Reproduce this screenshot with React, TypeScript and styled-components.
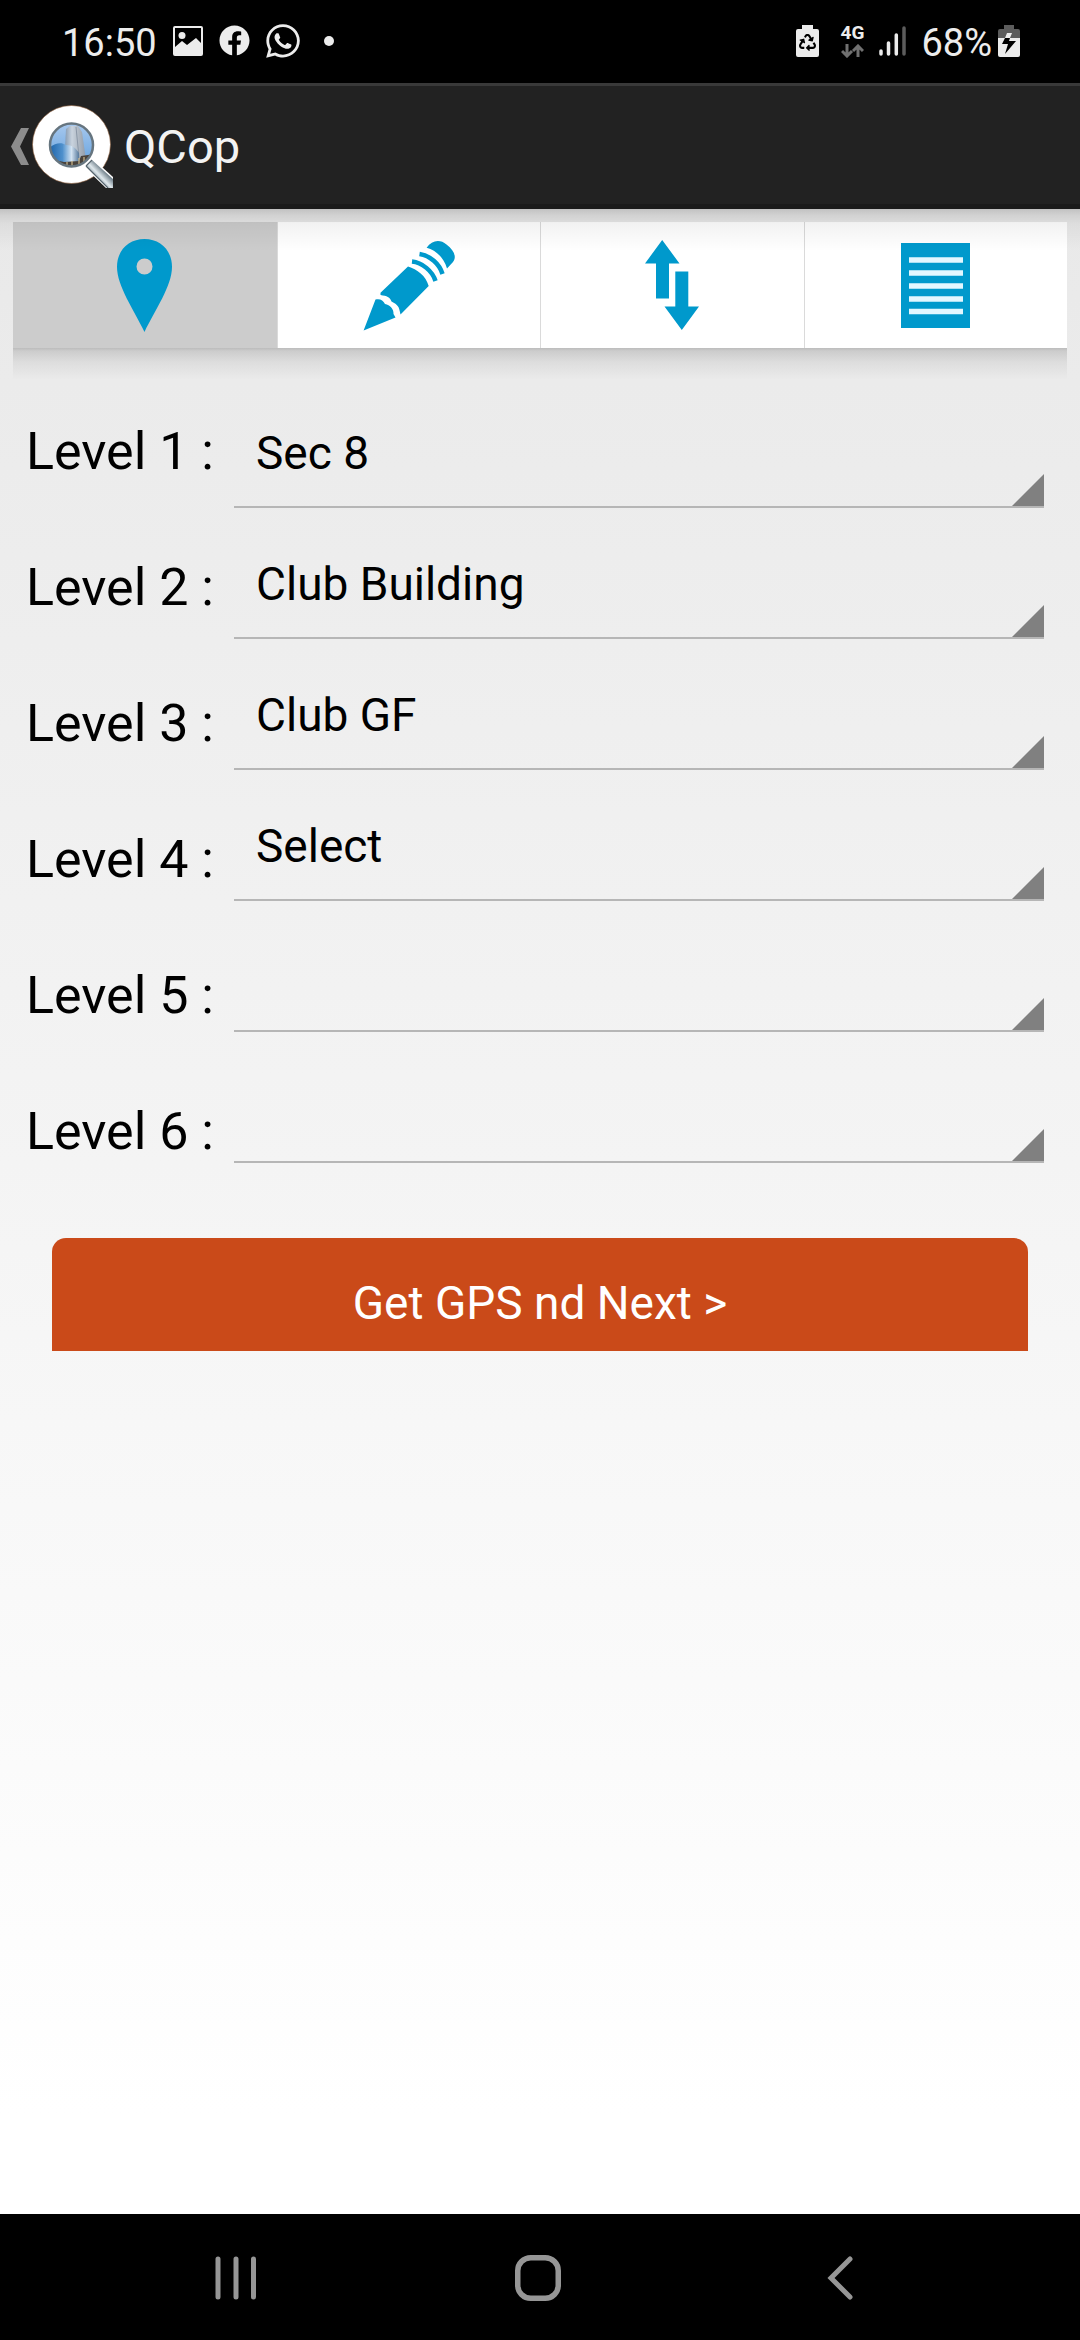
import React from "react";
import styled, { createGlobalStyle } from "styled-components";
import { FaFacebook, FaRecycle, FaWhatsapp } from "react-icons/fa";

const GlobalStyle = createGlobalStyle`
  *, *::before, *::after { box-sizing: border-box; }
  body { margin: 0; font-family: Roboto, "Noto Sans", sans-serif; }
  button, select { font: inherit; margin: 0; border: 0; border-radius: 0; background: none; }
  svg { display: block; flex: none; }
`;

const Screen = styled.div`
  display: flex;
  flex-direction: column;
  min-height: 100vh;
  color: #000;
`;

const StatusBar = styled.header`
  display: flex;
  align-items: center;
  justify-content: space-between;
  height: 83px;
  padding: 0 60px 2px 62px;
  background: #000;
  color: #ececec;
`;

const StatusGroup = styled.div<{ $gap: number }>`
  display: flex;
  align-items: center;
  gap: ${(p) => p.$gap}px;
`;

const StatusText = styled.span`
  padding-top: 4px;
  font-size: 38px;
  line-height: 44px;
`;

const MoreDot = styled.span`
  width: 10px;
  height: 10px;
  margin-left: 8px;
  border-radius: 50%;
  background: #ececec;
`;

const Network = styled.div`
  display: flex;
  flex-direction: column;
  align-items: center;
  gap: 2px;
  font-size: 19px;
  font-weight: 700;
  line-height: 18px;
`;

const ActionBar = styled.div`
  position: relative;
  display: flex;
  align-items: center;
  height: 126px;
  padding: 3px 0 0 11px;
  border-top: 3px solid #393939;
  border-bottom: 5px solid #1b1b1b;
  background: #222;

  /* soft shadow cast over the content below */
  &::after {
    content: "";
    position: absolute;
    z-index: 1;
    top: 123px;
    left: 0;
    right: 0;
    height: 42px;
    background: linear-gradient(rgba(0, 0, 0, 0.17), rgba(0, 0, 0, 0.1) 15%, rgba(0, 0, 0, 0.05) 35%, rgba(0, 0, 0, 0));
    pointer-events: none;
  }
`;

const UpButton = styled.button`
  display: flex;
  align-items: center;
  gap: 3px;
  padding: 0;
`;

const AppTitle = styled.h1`
  margin: 0 0 0 10px;
  color: #f3f3f3;
  font-size: 47px;
  font-weight: 400;
  line-height: 56px;
`;

const Content = styled.main`
  flex: 1;
  padding: 13px 13px 0;
  background: linear-gradient(#e9e9e9, #fff 95%);
`;

const Tabs = styled.div`
  display: grid;
  grid-template-columns: repeat(4, 1fr);
`;

const Tab = styled.button<{ $active?: boolean }>`
  display: flex;
  align-items: center;
  justify-content: center;
  height: 126px;
  padding: 0;
  background: ${(p) => (p.$active ? "#ccc" : "#fff")};
  color: #0099cc;

  & + & {
    border-left: 1px solid #dadada;
  }
`;

const Panel = styled.section`
  padding: 29px 23px 0 13px;
  background: linear-gradient(
      rgba(0, 0, 0, 0.2),
      rgba(0, 0, 0, 0.13) 3px,
      rgba(0, 0, 0, 0.06) 14px,
      rgba(0, 0, 0, 0) 32px
    )
    no-repeat;
`;

const LevelForm = styled.form`
  display: grid;
  grid-template-columns: 208px 1fr;
`;

const Labels = styled.div`
  display: flex;
  flex-direction: column;
  padding-top: 7px;
`;

const LevelLabel = styled.label`
  font-size: 52px;
  line-height: 136px;
  white-space: nowrap;
`;

const Fields = styled.div`
  display: flex;
  flex-direction: column;
`;

const LevelSelect = styled.select`
  appearance: none;
  width: 100%;
  height: 131px;
  padding: 23px 40px 0 22px;
  border-bottom: 2px solid #b6b6b6;
  background: linear-gradient(135deg, transparent 49%, #808080 51%) right bottom / 32px 32px no-repeat;
  color: #000;
  font-size: 46px;
`;

const NextButton = styled.button`
  grid-column: 1 / -1;
  height: 113px;
  margin: 38px 16px 0 26px;
  padding: 16px 0 0;
  border-radius: 14px 14px 0 0;
  background: #ca4a19;
  color: #fff;
  font-size: 46px;
  line-height: 54px;
`;

const NavBar = styled.nav`
  display: grid;
  grid-template-columns: repeat(3, 1fr);
  height: 126px;
  padding: 0 89px 0 85px;
  background: #000;
`;

const NavButton = styled.button`
  display: flex;
  align-items: center;
  justify-content: center;
  padding: 2px 0 0;
  color: #969696;
`;

const PictureIcon = () => (
  <svg width="32" height="30" viewBox="0 0 32 30" fill="currentColor">
    <path fillRule="evenodd" d="M3 0h26a2 2 0 0 1 2 2v26a2 2 0 0 1-2 2H3a2 2 0 0 1-2-2V2a2 2 0 0 1 2-2zm0 2v19l7-6 5 4 9-7 5 5V2z" />
    <circle cx="10" cy="9.500" r="3.500" />
  </svg>
);

const RecycleBattery = () => (
  <svg width="23" height="32" viewBox="0 0 23 32">
    <path fill="#ececec" d="M6 0h11v4h4a2 2 0 0 1 2 2v24a2 2 0 0 1-2 2H2a2 2 0 0 1-2-2V6a2 2 0 0 1 2-2h4z" />
    <FaRecycle x={3} y={9} size={17} color="#000" />
  </svg>
);

const DataArrows = () => (
  <svg width="23" height="14" viewBox="0 0 23 14" fill="none" stroke="#707070" strokeWidth="3">
    <path d="M6 0v12M1 7l5 5 5-5M17 13V2M12 7l5-5 5 5" />
  </svg>
);

const SignalIcon = () => (
  <svg width="27" height="30" viewBox="0 0 27 30" strokeWidth="3.500" strokeLinecap="round" stroke="#ececec">
    <path d="M2 25v3M9.500 17v11M17.300 9v19" />
    <path d="M25 2v26" stroke="#5c5c5c" />
  </svg>
);

const ChargingBattery = () => (
  <svg width="22" height="32" viewBox="0 0 22 32">
    <path fill="#5c5c5c" d="M6 0h10v4h4a2 2 0 0 1 2 2v8H0V6a2 2 0 0 1 2-2h4z" />
    <path fill="#ececec" d="M0 13h22v17a2 2 0 0 1-2 2H2a2 2 0 0 1-2-2z" />
    <path fill="#ececec" d="M9 8h5l-2 5H7z" />
    <path fill="#000" d="M7 13h5l-1 3h7L7 29l3-10H4z" />
  </svg>
);

const UpChevron = () => (
  <svg width="18" height="37" viewBox="0 0 18 37" fill="#8c8c8c">
    <path d="M10 0h8L9 18.500 18 37h-8L0 18.500z" />
  </svg>
);

const AppLogo = () => (
  <svg width="82" height="83" viewBox="0 0 82 83">
    <defs>
      <linearGradient id="sky" x1="0" y1="0" x2="0" y2="1">
        <stop offset="0" stopColor="#a9c9ee" />
        <stop offset="1" stopColor="#5f9fdd" />
      </linearGradient>
      <linearGradient id="tower" x1="0" y1="0" x2="1" y2="0">
        <stop offset="0" stopColor="#7c93ad" />
        <stop offset="0.350" stopColor="#c9d3de" />
        <stop offset="0.700" stopColor="#a9b2bd" />
        <stop offset="1" stopColor="#8d98a6" />
      </linearGradient>
      <linearGradient id="glass" x1="0" y1="0" x2="1" y2="0">
        <stop offset="0" stopColor="#1b62a8" />
        <stop offset="0.450" stopColor="#4f90cc" />
        <stop offset="0.750" stopColor="#d3e3f2" />
        <stop offset="1" stopColor="#56789b" />
      </linearGradient>
      <linearGradient id="handle" x1="0" y1="1" x2="1" y2="0">
        <stop offset="0.300" stopColor="#74858f" />
        <stop offset="0.480" stopColor="#dfe8ec" />
        <stop offset="0.650" stopColor="#6d7d87" />
      </linearGradient>
      <clipPath id="lens">
        <circle cx="39.500" cy="40" r="21" />
      </clipPath>
    </defs>
    <circle cx="39.500" cy="39.500" r="39" fill="#fff" stroke="#8a5a38" strokeWidth="0.600" />
    <path d="M50 60l9-8 22 20v11h-7z" fill="#fff" />
    <g clipPath="url(#lens)">
      <path d="M17 18h45v45H17z" fill="url(#sky)" />
      <path d="M32 62l2-38 4-3h8l4 6 5 35z" fill="url(#tower)" />
      <path d="M44 22l4 40" stroke="#8b97a6" strokeWidth="1" />
      <path d="M17 43c6-5 12-6 17-3 6 0 10 3 13 8v14H17z" fill="url(#glass)" />
      <path d="M18 54l14 3 15-1 2-5 13-2v14H18z" fill="#4a433c" />
      <path d="M35 57v6M40 56v7M47 53v9M52 52v9" stroke="#cdb98c" strokeWidth="1.200" />
    </g>
    <circle cx="39.500" cy="40" r="21.500" fill="none" stroke="#66757f" strokeWidth="2.500" />
    <path d="M54 61l6-6 21 19v9h-5z" fill="url(#handle)" />
    <path d="M54 61l6-6M54 61l22 22" stroke="#56646d" strokeWidth="1.200" fill="none" />
  </svg>
);

const PinIcon = () => (
  <svg width="55" height="93" viewBox="0 0 55 93" fill="currentColor">
    <path
      fillRule="evenodd"
      d="M27.500 0C43 0 55 11 55 28c0 19-17 43-27.500 65C17 71 0 47 0 28 0 11 12 0 27.500 0zm0 19.500a8 8 0 1 0 0 16 8 8 0 0 0 0-16z"
    />
  </svg>
);

const PencilIcon = () => (
  <svg width="92" height="91" viewBox="0 0 92 91" fill="currentColor">
    <path d="M0.600 90.500L12.500 59.500C17 58.500 20 60 22 64c5 1 9 5 8.500 10l2 3.500z" />
    <path d="M17.500 52.700L45 26.500C54 29 63 36 65.700 46L37.500 74.500C36 66 35 65 28.500 61.500 27 57 24 56 17.500 55z" />
    <path d="M49 21.500C59 22.500 69.500 31 72.500 41M56.500 14C67 15.500 76.500 24 79.500 34" fill="none" stroke="currentColor" strokeWidth="4.500" />
    <path d="M63.600 7.700C69 0 77-1 83.500 4.500 91 10 94 17 90 22l-6 6.500C81 18 73 10 63.600 7.700z" />
  </svg>
);

const SyncIcon = () => (
  <svg width="54" height="90" viewBox="0 0 54 90" fill="currentColor">
    <path d="M17.200 0l17.300 23.500H24V58.500H11V23.500H0z" />
    <path d="M30.300 31.500h13v35H54L36.800 90 19.500 66.500h10.800z" />
  </svg>
);

const ListIcon = () => (
  <svg width="69" height="85" viewBox="0 0 69 85" fill="currentColor">
    <path d="M0 0h69v85H0z" />
    <path d="M8 17h54M8 30h54M8 43h54M8 56h54M8 68.500h54" stroke="#e2f7ff" strokeWidth="5.500" />
  </svg>
);

const RecentsIcon = () => (
  <svg width="42" height="44" viewBox="0 0 42 44" stroke="currentColor" strokeWidth="5" strokeLinecap="round">
    <path d="M3 3v38M21 3v38M38.500 3v38" />
  </svg>
);

const HomeIcon = () => (
  <svg width="46" height="46" viewBox="0 0 46 46" fill="none" stroke="currentColor" strokeWidth="5.500">
    <rect x="2.750" y="2.750" width="40.500" height="40.500" rx="13" />
  </svg>
);

const BackIcon = () => (
  <svg width="26" height="44" viewBox="0 0 26 44" fill="none" stroke="currentColor" strokeWidth="5" strokeLinecap="round">
    <path d="M23 3L4 22l19 19" />
  </svg>
);

const tabs = [
  { name: "Location", icon: <PinIcon /> },
  { name: "Edit", icon: <PencilIcon /> },
  { name: "Sync", icon: <SyncIcon /> },
  { name: "List", icon: <ListIcon /> },
];

const levels = ["Sec 8", "Club Building", "Club GF", "Select", "", ""];

export default function App() {
  return (
    <Screen>
      <GlobalStyle />
      <StatusBar>
        <StatusGroup $gap={15}>
          <StatusText>16:50</StatusText>
          <PictureIcon />
          <FaFacebook size={31} />
          <FaWhatsapp size={36} viewBox="16 16 416 480" />
          <MoreDot />
        </StatusGroup>
        <StatusGroup $gap={6}>
          <StatusGroup $gap={15}>
            <StatusGroup $gap={22}>
              <RecycleBattery />
              <Network>
                4G
                <DataArrows />
              </Network>
            </StatusGroup>
            <SignalIcon />
            <StatusText>68%</StatusText>
          </StatusGroup>
          <ChargingBattery />
        </StatusGroup>
      </StatusBar>
      <ActionBar>
        <UpButton type="button" aria-label="Navigate up">
          <UpChevron />
          <AppLogo />
        </UpButton>
        <AppTitle>QCop</AppTitle>
      </ActionBar>
      <Content>
        <Tabs role="tablist">
          {tabs.map((tab, i) => (
            <Tab key={tab.name} type="button" role="tab" aria-label={tab.name} aria-selected={i === 0} $active={i === 0}>
              {tab.icon}
            </Tab>
          ))}
        </Tabs>
        <Panel>
          <LevelForm onSubmit={(e) => e.preventDefault()}>
            <Labels>
              {levels.map((_, i) => (
                <LevelLabel key={i} htmlFor={`level-${i + 1}`}>{`Level ${i + 1} :`}</LevelLabel>
              ))}
            </Labels>
            <Fields>
              {levels.map((value, i) => (
                <LevelSelect key={i} id={`level-${i + 1}`} defaultValue={value}>
                  <option value={value}>{value}</option>
                </LevelSelect>
              ))}
            </Fields>
            <NextButton type="submit">{"Get GPS nd Next >"}</NextButton>
          </LevelForm>
        </Panel>
      </Content>
      <NavBar>
        <NavButton type="button" aria-label="Recent apps">
          <RecentsIcon />
        </NavButton>
        <NavButton type="button" aria-label="Home">
          <HomeIcon />
        </NavButton>
        <NavButton type="button" aria-label="Back">
          <BackIcon />
        </NavButton>
      </NavBar>
    </Screen>
  );
}
